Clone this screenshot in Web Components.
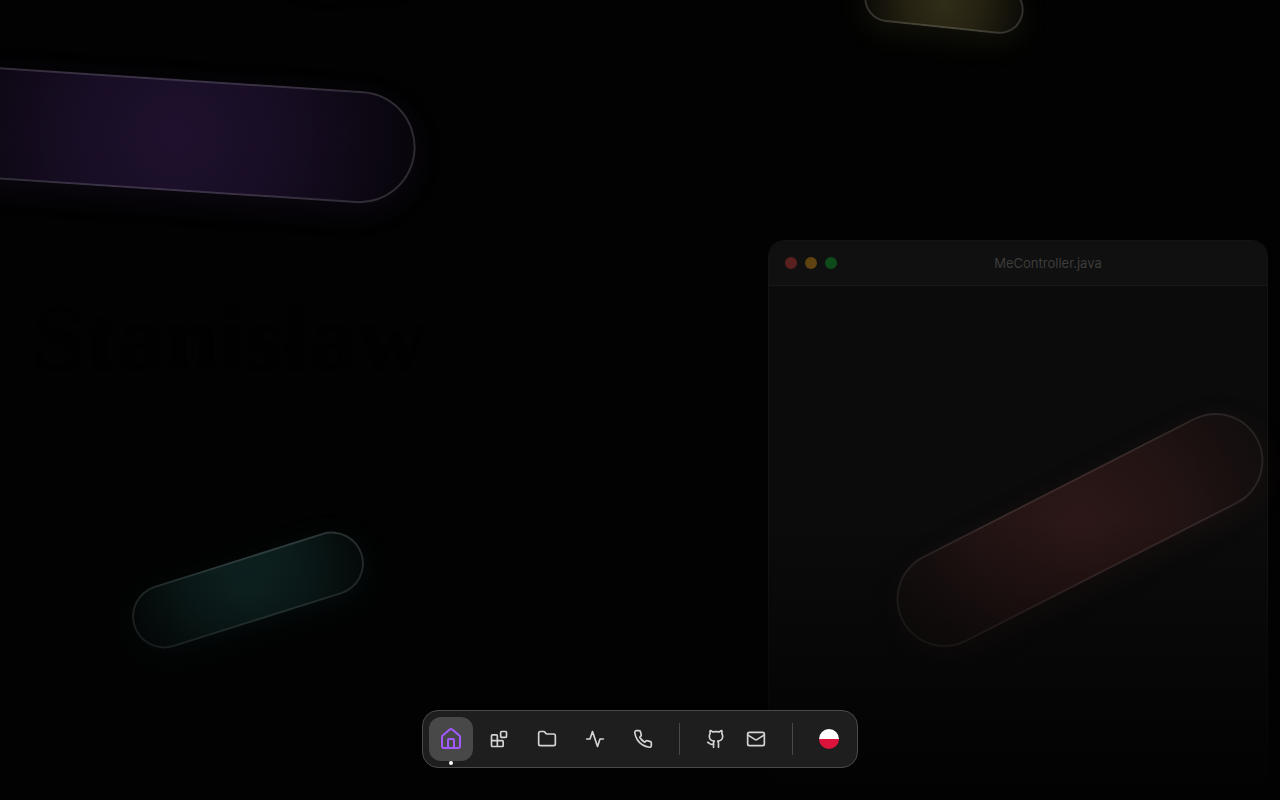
<!DOCTYPE html>
<html lang="en">
<head>
<meta charset="utf-8">
<meta name="viewport" content="width=device-width, initial-scale=1">
<title>Portfolio</title>
<style>
    body {
        margin: 0;
        background: #020202;
        color: #fff;
        font-family: Inter, "Liberation Sans", sans-serif;
    }
</style>
</head>
<body>
<portfolio-page>
    <glow-pill slot="backdrop" style="--w:480px;--h:112px;--x:176px;--y:135px;--angle:3.8deg;--tint:117,64,180"></glow-pill>
    <glow-pill slot="backdrop" style="--w:240px;--h:64px;--x:248px;--y:590px;--angle:-17.5deg;--tint:60,160,154"></glow-pill>
    <glow-pill slot="backdrop" style="--w:160px;--h:48px;--x:944px;--y:4px;--angle:6deg;--tint:190,174,90"></glow-pill>
    <glow-pill slot="backdrop" style="--w:120px;--h:32px;--x:354px;--y:-42px;--angle:-4deg;--tint:130,90,30"></glow-pill>
    <glow-pill slot="backdrop" style="--w:400px;--h:96px;--x:1080px;--y:530px;--angle:-27deg;--tint:146,62,62;--edge:.09"></glow-pill>
    <hero-name>Stanisław</hero-name>
    <code-window slot="aside">MeController.java</code-window>
    <app-dock slot="dock"></app-dock>
</portfolio-page>

<script>
const pageTemplate = document.createElement('template');
pageTemplate.innerHTML = `<style>
                            :host {
                                display: block;
                                position: relative;
                                height: 100vh;
                                overflow: hidden;
                            }
                            .backdrop {
                                position: absolute;
                                inset: 0;
                            }
                            main {
                                display: grid;
                                grid-template-columns: 3fr 2fr;
                                align-items: start;
                                padding-top: 240px;
                            }
                            .name {
                                padding: 50px 32px 0;
                            }
                            .aside {
                                padding-right: 12px;
                            }
                            .fade {
                                position: absolute;
                                inset: 65% 0 0;
                                background: linear-gradient(to bottom, transparent, #020202);
                            }
                            .dock {
                                position: absolute;
                                inset: auto 0 32px;
                                display: flex;
                                justify-content: center;
                            }
                        </style>
                        <main>
                            <div class="name"><slot></slot></div>
                            <div class="aside"><slot name="aside"></slot></div>
                        </main>
                        <div class="backdrop"><slot name="backdrop"></slot></div>
                        <div class="fade"></div>
                        <div class="dock"><slot name="dock"></slot></div>`;

class PortfolioPage extends HTMLElement {
    constructor() {
        super();
        this.attachShadow({ mode: 'open' });
        this.shadowRoot.appendChild(pageTemplate.content.cloneNode(true));
    }
}

// floating decorative shape, placed by its centre
const pillTemplate = document.createElement('template');
pillTemplate.innerHTML = `<style>
                            :host {
                                display: block;
                                position: absolute;
                                box-sizing: border-box;
                                left: calc(var(--x) - var(--w) / 2);
                                top: calc(var(--y) - var(--h) / 2);
                                width: var(--w);
                                height: var(--h);
                                border: 2px solid rgba(255, 255, 255, var(--edge, .15));
                                border-radius: 999px;
                                background: radial-gradient(circle, rgba(var(--tint), .25), rgba(var(--tint), .19) 45%, rgba(var(--tint), .05) 100%);
                                box-shadow: 0 8px 32px rgba(var(--tint), .1);
                                transform: rotate(var(--angle));
                            }
                        </style>`;

class GlowPill extends HTMLElement {
    constructor() {
        super();
        this.attachShadow({ mode: 'open' });
        this.shadowRoot.appendChild(pillTemplate.content.cloneNode(true));
    }
}

const nameTemplate = document.createElement('template');
nameTemplate.innerHTML = `<style>
                            :host {
                                display: block;
                            }
                            h1 {
                                margin: 0;
                                font: bold 96px/96px "Liberation Serif", serif;
                                color: #010101;
                            }
                        </style>
                        <h1><slot></slot></h1>`;

class HeroName extends HTMLElement {
    constructor() {
        super();
        this.attachShadow({ mode: 'open' });
        this.shadowRoot.appendChild(nameTemplate.content.cloneNode(true));
    }
}

const windowTemplate = document.createElement('template');
windowTemplate.innerHTML = `<style>
                            :host {
                                display: block;
                                box-sizing: border-box;
                                height: calc(100vh - 252px);
                                border: 1px solid #131313;
                                border-radius: 16px;
                                background: #0b0b0b;
                                overflow: hidden;
                            }
                            header {
                                display: flex;
                                align-items: center;
                                gap: 8px;
                                padding: 12px 16px;
                                border-bottom: 1px solid #171717;
                                background: #101010;
                            }
                            .lights {
                                display: flex;
                                gap: 8px;
                            }
                            .lights i {
                                width: 12px;
                                height: 12px;
                                border-radius: 50%;
                            }
                            .red { background: #5a2020; }
                            .yellow { background: #5e4210; }
                            .green { background: #0f4a1a; }
                            .title {
                                flex: 1;
                                text-align: center;
                                font-size: 13px;
                                line-height: 20px;
                                color: #3c3c3c;
                            }
                        </style>
                        <header>
                            <div class="lights"><i class="red"></i><i class="yellow"></i><i class="green"></i></div>
                            <div class="title"><slot></slot></div>
                        </header>`;

class CodeWindow extends HTMLElement {
    constructor() {
        super();
        this.attachShadow({ mode: 'open' });
        this.shadowRoot.appendChild(windowTemplate.content.cloneNode(true));
    }
}

const icons = {
    home: '<path d="M15 21v-8a1 1 0 0 0-1-1h-4a1 1 0 0 0-1 1v8"/><path d="M3 10a2 2 0 0 1 .709-1.528l7-5.999a2 2 0 0 1 2.582 0l7 5.999A2 2 0 0 1 21 10v9a2 2 0 0 1-2 2H5a2 2 0 0 1-2-2z"/>',
    blocks: '<rect width="7" height="7" x="14" y="3" rx="1"/><path d="M10 21V8a1 1 0 0 0-1-1H4a1 1 0 0 0-1 1v12a1 1 0 0 0 1 1h12a1 1 0 0 0 1-1v-5a1 1 0 0 0-1-1H3"/>',
    folder: '<path d="M20 20a2 2 0 0 0 2-2V8a2 2 0 0 0-2-2h-7.9a2 2 0 0 1-1.69-.9L9.6 3.9A2 2 0 0 0 7.93 3H4a2 2 0 0 0-2 2v13a2 2 0 0 0 2 2Z"/>',
    activity: '<path d="M22 12h-4l-3 9L9 3l-3 9H2"/>',
    phone: '<path d="M22 16.92v3a2 2 0 0 1-2.18 2 19.79 19.79 0 0 1-8.63-3.07 19.5 19.5 0 0 1-6-6 19.79 19.79 0 0 1-3.07-8.67A2 2 0 0 1 4.11 2h3a2 2 0 0 1 2 1.72 12.84 12.84 0 0 0 .7 2.81 2 2 0 0 1-.45 2.11L8.09 9.91a16 16 0 0 0 6 6l1.27-1.27a2 2 0 0 1 2.11-.45 12.84 12.84 0 0 0 2.81.7A2 2 0 0 1 22 16.92z"/>',
    github: '<path d="M15 22v-4a4.8 4.8 0 0 0-1-3.5c3 0 6-2 6-5.5.08-1.25-.27-2.48-1-3.5.28-1.15.28-2.35 0-3.5 0 0-1 0-3 1.5-2.64-.5-5.36-.5-8 0C6 2 5 2 5 2c-.3 1.15-.3 2.35 0 3.5A5.403 5.403 0 0 0 4 9c0 3.5 3 5.5 6 5.5-.39.49-.68 1.05-.85 1.65-.17.6-.22 1.23-.15 1.85v4"/><path d="M9 18c-4.51 2-5-2-7-2"/>',
    mail: '<rect width="20" height="16" x="2" y="4" rx="2"/><path d="m22 7-8.97 5.7a1.94 1.94 0 0 1-2.06 0L2 7"/>'
};

const icon = (name) => `<svg viewBox="0 0 24 24" fill="none" stroke="currentColor" stroke-width="2" stroke-linecap="round" stroke-linejoin="round" aria-hidden="true">${icons[name]}</svg>`;

const dockTemplate = document.createElement('template');
dockTemplate.innerHTML = `<style>
                            :host {
                                display: block;
                            }
                            nav {
                                display: flex;
                                align-items: center;
                                gap: 4px;
                                padding: 6px;
                                border: 1px solid #4a4a4a;
                                border-radius: 16px;
                                background: #1e1e1e;
                            }
                            a, button {
                                position: relative;
                                display: flex;
                                align-items: center;
                                justify-content: center;
                                width: 44px;
                                height: 44px;
                                padding: 0;
                                border: none;
                                border-radius: 12px;
                                background: none;
                                color: #d4d4d4;
                                cursor: pointer;
                            }
                            .links {
                                display: flex;
                                padding: 0 2px;
                            }
                            .links a {
                                width: 40px;
                            }
                            svg {
                                width: 20px;
                                height: 20px;
                            }
                            .active {
                                background: #484848;
                                color: #a259ff;
                            }
                            .active svg {
                                width: 24px;
                                height: 24px;
                            }
                            .active::after {
                                content: "";
                                position: absolute;
                                bottom: -4px;
                                width: 4px;
                                height: 4px;
                                border-radius: 50%;
                                background: #fff;
                            }
                            .divider {
                                width: 1px;
                                height: 32px;
                                margin: 0 10px;
                                background: #4a4a4a;
                            }
                            .flag {
                                width: 20px;
                                height: 20px;
                                border-radius: 50%;
                                background: linear-gradient(#fff 50%, #dc143c 50%);
                            }
                        </style>
                        <nav aria-label="Main">
                            <a class="active" href="#home" aria-label="Home">${icon('home')}</a>
                            <a href="#stack" aria-label="Stack">${icon('blocks')}</a>
                            <a href="#projects" aria-label="Projects">${icon('folder')}</a>
                            <a href="#activity" aria-label="Activity">${icon('activity')}</a>
                            <a href="#contact" aria-label="Contact">${icon('phone')}</a>
                            <span class="divider"></span>
                            <div class="links">
                                <a href="#github" aria-label="GitHub">${icon('github')}</a>
                                <a href="#mail" aria-label="Email">${icon('mail')}</a>
                            </div>
                            <span class="divider"></span>
                            <button type="button" aria-label="Change language"><span class="flag"></span></button>
                        </nav>`;

class AppDock extends HTMLElement {
    constructor() {
        super();
        this.attachShadow({ mode: 'open' });
        this.shadowRoot.appendChild(dockTemplate.content.cloneNode(true));
    }
}

window.customElements.define("portfolio-page", PortfolioPage);
window.customElements.define("glow-pill", GlowPill);
window.customElements.define("hero-name", HeroName);
window.customElements.define("code-window", CodeWindow);
window.customElements.define("app-dock", AppDock);
</script>
</body>
</html>
